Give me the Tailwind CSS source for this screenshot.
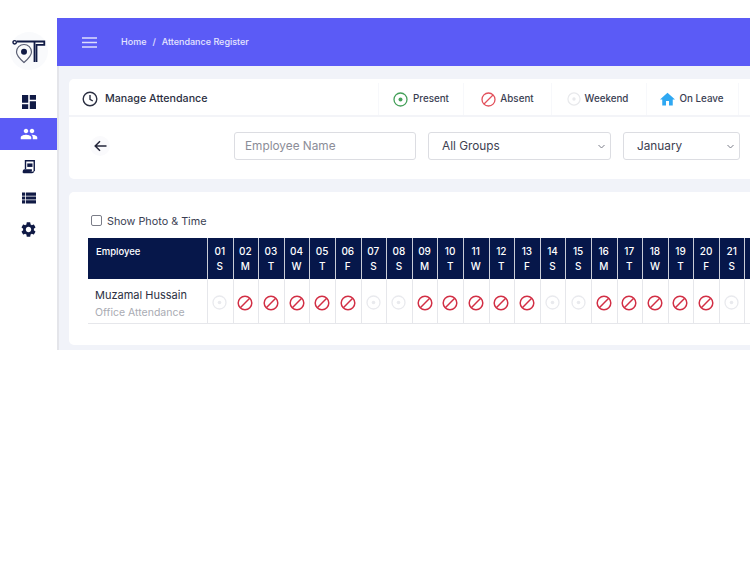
<!DOCTYPE html>
<html lang="en">
<head>
  <meta charset="UTF-8" />
  <title>Attendance Register</title>
  <script src="https://cdn.jsdelivr.net/npm/@tailwindcss/browser@4"></script>
</head>
<body class="bg-white font-['Inter',sans-serif] text-[#2b2f42] overflow-hidden">
  <div class="w-[750px] h-[562px] overflow-hidden">
    <div class="flex h-[350px] pt-[18px]">
      <!-- Sidebar -->
      <aside class="w-[57px] shrink-0 flex flex-col">
        <div class="h-[73px] flex items-center justify-center pb-[7px]">
          <div class="w-[38px] h-[38px] rounded-full bg-[#f9fafc] flex items-center justify-center">
            <svg width="34" height="25" viewBox="0 0 34 25" fill="none" stroke="#101a45">
              <circle cx="2.700" cy="3.300" r="1.700" stroke-width="1.400" />
              <path d="M5 2.500H32.300V5.800H24.500V23" stroke-width="1.800" />
              <path d="M22.500 3V23" stroke-width="1.800" />
              <path d="M12 5.500a7.500 7.500 0 0 1 7.500 7.500c0 3.500-4 7.500-7.500 10.500C8.500 20.500 4.500 16.500 4.500 13A7.500 7.500 0 0 1 12 5.500Z" stroke="#5a5f74" stroke-width="1.200" />
              <circle cx="12" cy="12.700" r="3" fill="#101a45" stroke="none" />
            </svg>
          </div>
        </div>
        <nav class="flex flex-col">
          <div class="h-[27px] flex items-center justify-center pb-[5px]">
            <svg width="14" height="14" viewBox="3 3 18 18" fill="#101a45"><path d="M3 13h8V3H3v10zm0 8h8v-6H3v6zm10 0h8V11h-8v10zm0-18v6h8V3h-8z" /></svg>
          </div>
          <div class="h-[32px] bg-[#5b5bf6] flex items-center justify-center">
            <svg width="18" height="18" viewBox="0 0 24 24" fill="#fff"><path d="M16 11c1.660 0 2.990-1.340 2.990-3S17.660 5 16 5s-3 1.340-3 3 1.340 3 3 3zm-8 0c1.660 0 2.990-1.340 2.990-3S9.660 5 8 5 5 6.340 5 8s1.340 3 3 3zm0 2c-2.330 0-7 1.170-7 3.500V19h14v-2.500C15 14.170 10.330 13 8 13zm8 0c-.29 0-.62.020-.97.050 1.160.840 1.970 1.970 1.970 3.450V19h6v-2.500c0-2.330-4.670-3.500-7-3.500z" /></svg>
          </div>
          <div class="h-[32px] flex items-center justify-center">
            <svg width="14" height="15" viewBox="0 0 16 17" fill="none" stroke="#101a45" stroke-width="1.600">
              <path d="M4 11.500V2h10v12" />
              <path d="M1.500 15.500h10c1 0 1.500-.700 1.500-1.500" />
              <path d="M1.500 15.500c0-2 .500-3 1.500-3h7.500v2" fill="#101a45" />
              <path d="M6 5h6v4H6z" fill="#101a45" stroke="none" />
            </svg>
          </div>
          <div class="h-[32px] flex items-center justify-center">
            <svg width="14" height="12" viewBox="3 5 18 14" fill="#101a45"><path d="M3 14h4v-4H3v4zm0 5h4v-4H3v4zM3 9h4V5H3v4zm5 5h13v-4H8v4zm0 5h13v-4H8v4zM8 5v4h13V5H8z" /></svg>
          </div>
          <div class="h-[32px] flex items-center justify-center pb-[1px]">
            <svg width="15" height="15" viewBox="2 2 20 20" fill="#101a45"><path d="M19.140 12.940c.040-.300.060-.610.060-.940 0-.320-.020-.640-.070-.940l2.030-1.580a.490.490 0 0 0 .120-.610l-1.920-3.320a.488.488 0 0 0-.590-.220l-2.390.960c-.500-.380-1.030-.700-1.620-.940l-.360-2.540a.484.484 0 0 0-.480-.410h-3.840c-.240 0-.430.170-.470.410l-.360 2.540c-.590.240-1.130.570-1.620.940l-2.390-.960c-.220-.080-.470 0-.590.220L2.740 8.870c-.120.210-.080.470.120.610l2.030 1.580c-.050.300-.090.630-.090.940s.020.640.070.940l-2.030 1.580a.490.490 0 0 0-.120.610l1.920 3.320c.120.220.370.290.590.220l2.390-.960c.500.380 1.030.700 1.620.940l.360 2.540c.050.240.240.410.480.410h3.840c.240 0 .440-.170.470-.410l.360-2.540c.590-.240 1.130-.560 1.620-.940l2.390.960c.220.080.470 0 .590-.220l1.920-3.320c.120-.220.070-.470-.120-.610l-2.010-1.580zM12 15.600c-1.980 0-3.600-1.620-3.600-3.600s1.620-3.600 3.600-3.600 3.600 1.620 3.600 3.600-1.620 3.600-3.600 3.600z" /></svg>
          </div>
        </nav>
      </aside>

      <div class="flex-1 min-w-0 flex flex-col">
        <!-- Top bar -->
        <header class="h-[48px] shrink-0 bg-[#5b5bf6] flex items-center pl-[25px] text-white">
          <svg width="15" height="11" viewBox="0 0 15 11" stroke="#fff" stroke-width="1.500" class="opacity-80"><path d="M0 1h15M0 5.500h15M0 10h15" /></svg>
          <div class="ml-[24px] text-[9px] font-medium text-white/85 flex gap-[6px]">
            <span>Home</span><span>/</span><span>Attendance Register</span>
          </div>
        </header>

        <div class="flex-1 bg-[#f1f3f9] border-l-[2px] border-[#e4e5ea] pl-[10px] pt-[13px] flex flex-col gap-[13px]">
          <!-- Manage card -->
          <section class="h-[100px] bg-white rounded-l-[5px]">
            <div class="h-[38px] flex items-center border-b-[2px] border-[#f3f4f8]">
              <div class="w-[309px] pl-[13px] pt-[5px] flex items-center gap-[7px] shrink-0">
                <svg width="16" height="16" viewBox="0 0 16 16" fill="none" stroke="#2b2f42" stroke-width="1.400"><circle cx="8" cy="8" r="6.800" /><path d="M8 4v4.300l2.800 1.700" /></svg>
                <span class="text-[10.700px] font-medium">Manage Attendance</span>
              </div>
              <div class="flex items-center text-[9.800px] font-medium text-[#3a3e52] h-full pt-[4px]">
                <div class="w-[85px] h-full flex items-center justify-center gap-[5px] border-l border-[#f7f8fb]">
                  <svg width="15" height="15" viewBox="0 0 15 15" fill="none"><circle cx="7.500" cy="7.500" r="6.500" stroke="#45a05a" stroke-width="1.300" /><circle cx="7.500" cy="7.500" r="2" fill="#45a05a" /></svg>
                  <span>Present</span>
                </div>
                <div class="w-[88px] h-full flex items-center justify-center gap-[4px] border-l border-[#f7f8fb]">
                  <svg width="15" height="15" viewBox="0 0 15 15" fill="none" stroke="#e2515c" stroke-width="1.300"><circle cx="7.500" cy="7.500" r="6.500" /><path d="M3 12 12 3" /></svg>
                  <span>Absent</span>
                </div>
                <div class="w-[95px] h-full flex items-center justify-center gap-[4px] border-l border-[#f7f8fb] pr-[3px]">
                  <svg width="14" height="14" viewBox="0 0 15 15" fill="none"><circle cx="7.500" cy="7.500" r="6.500" stroke="#e8e9ec" stroke-width="1.300" /><circle cx="7.500" cy="7.500" r="1.800" fill="#e8e9ec" /></svg>
                  <span>Weekend</span>
                </div>
                <div class="w-[93px] h-full flex items-center justify-center gap-[4px] border-x border-[#f7f8fb] pr-[1px]">
                  <svg width="15" height="14" viewBox="2 3 20 17" fill="#2fa8f2"><path d="M10 20v-6h4v6h5v-8h3L12 3 2 12h3v8z" /></svg>
                  <span>On Leave</span>
                </div>
              </div>
            </div>
            <div class="h-[60px] flex items-center pl-[21px] pb-[3px]">
              <div class="w-[20px] h-[20px] rounded-full bg-[#fafafc] flex items-center justify-center">
                <svg width="13" height="12" viewBox="0 0 13 12" fill="none" stroke="#23263a" stroke-width="1.500"><path d="M12.500 6H1.500M6 1.200 1.200 6 6 10.800" /></svg>
              </div>
              <div class="ml-[124px] w-[182px] h-[28px] border border-[#dcdde2] rounded-[3px] flex items-center pl-[10px] pt-[2px] text-[11.800px] text-[#8b8d98]">Employee Name</div>
              <div class="ml-[12px] w-[183px] h-[28px] border border-[#dcdde2] rounded-[3px] flex items-center justify-between pl-[13px] pr-[5px] pt-[2px] text-[11.800px] text-[#3d4050]">
                All Groups
                <svg width="7" height="5" viewBox="0 0 7 5" fill="none" stroke="#7a7c88" stroke-width="1"><path d="m.5 1 3 3 3-3" /></svg>
              </div>
              <div class="ml-[12px] w-[117px] h-[28px] border border-[#dcdde2] rounded-[3px] flex items-center justify-between pl-[13px] pr-[5px] pt-[2px] text-[11.800px] text-[#3d4050]">
                January
                <svg width="7" height="5" viewBox="0 0 7 5" fill="none" stroke="#7a7c88" stroke-width="1"><path d="m.5 1 3 3 3-3" /></svg>
              </div>
            </div>
          </section>

          <!-- Register card -->
          <section class="h-[153px] bg-white rounded-l-[5px] pl-[19px] pt-[23px]">
            <label class="flex items-center h-[14px] mb-[9px] pl-[3px] text-[10.800px] text-[#3a3e52]">
              <span class="w-[11px] h-[11px] border border-[#7b7d88] rounded-[2px] bg-white -mt-[3px]"></span>
              <span class="ml-[5px] mt-[1px]">Show Photo &amp; Time</span>
            </label>
            <div class="w-[700px] text-center">
              <div id="head" class="grid grid-cols-[119px_repeat(22,25.6px)] h-[41px] bg-[#06174a] text-white text-[10px] font-medium leading-[15px]">
                <div class="text-left pl-[8px] pt-[6px] text-[9.500px]">Employee</div>
              </div>
              <div id="row" class="grid grid-cols-[119px_repeat(22,25.6px)] h-[45px] border-b border-[#e6e7eb]">
                <div class="text-left pl-[7px] pt-[8px] text-[10.500px] leading-[17px]">
                  <div class="text-[11px]">Muzamal Hussain</div>
                  <div class="text-[#a9abb3]">Office Attendance</div>
                </div>
              </div>
            </div>
          </section>
        </div>
      </div>
    </div>
  </div>

  <script>
    const days = ['S','M','T','W','T','F','S','S','M','T','W','T','F','S','S','M','T','W','T','F','S'];
    const absentIcon = '<svg width="16" height="16" viewBox="0 0 16 16" fill="none" stroke="#d22f45" stroke-width="1.500"><circle cx="8" cy="8" r="6.800" /><path d="M3.300 12.700 12.700 3.300" /></svg>';
    const weekendIcon = '<svg width="15" height="15" viewBox="0 0 15 15" fill="none"><circle cx="7.500" cy="7.500" r="6.500" stroke="#e9eaee" stroke-width="1.300" /><circle cx="7.500" cy="7.500" r="1.800" fill="#e9eaee" /></svg>';
    const headRow = document.getElementById('head');
    const bodyRow = document.getElementById('row');
    days.forEach((d, i) => {
      const h = document.createElement('div');
      h.className = 'border-l border-[#c9cdd8] pt-[6px] pr-[1px]';
      h.innerHTML = String(i + 1).padStart(2, '0') + '<br>' + d;
      headRow.appendChild(h);
      const c = document.createElement('div');
      c.className = 'border-l border-[#e6e7eb] flex items-center justify-center pt-[3px] pr-[1px]';
      c.innerHTML = d === 'S' ? weekendIcon : absentIcon;
      bodyRow.appendChild(c);
    });
    // column 22 runs off the right edge, nothing readable in it
    const stub = document.createElement('div');
    stub.className = 'border-l border-[#c9cdd8]';
    headRow.appendChild(stub);
    const stubCell = document.createElement('div');
    stubCell.className = 'border-l border-[#e6e7eb]';
    bodyRow.appendChild(stubCell);
  </script>
</body>
</html>
